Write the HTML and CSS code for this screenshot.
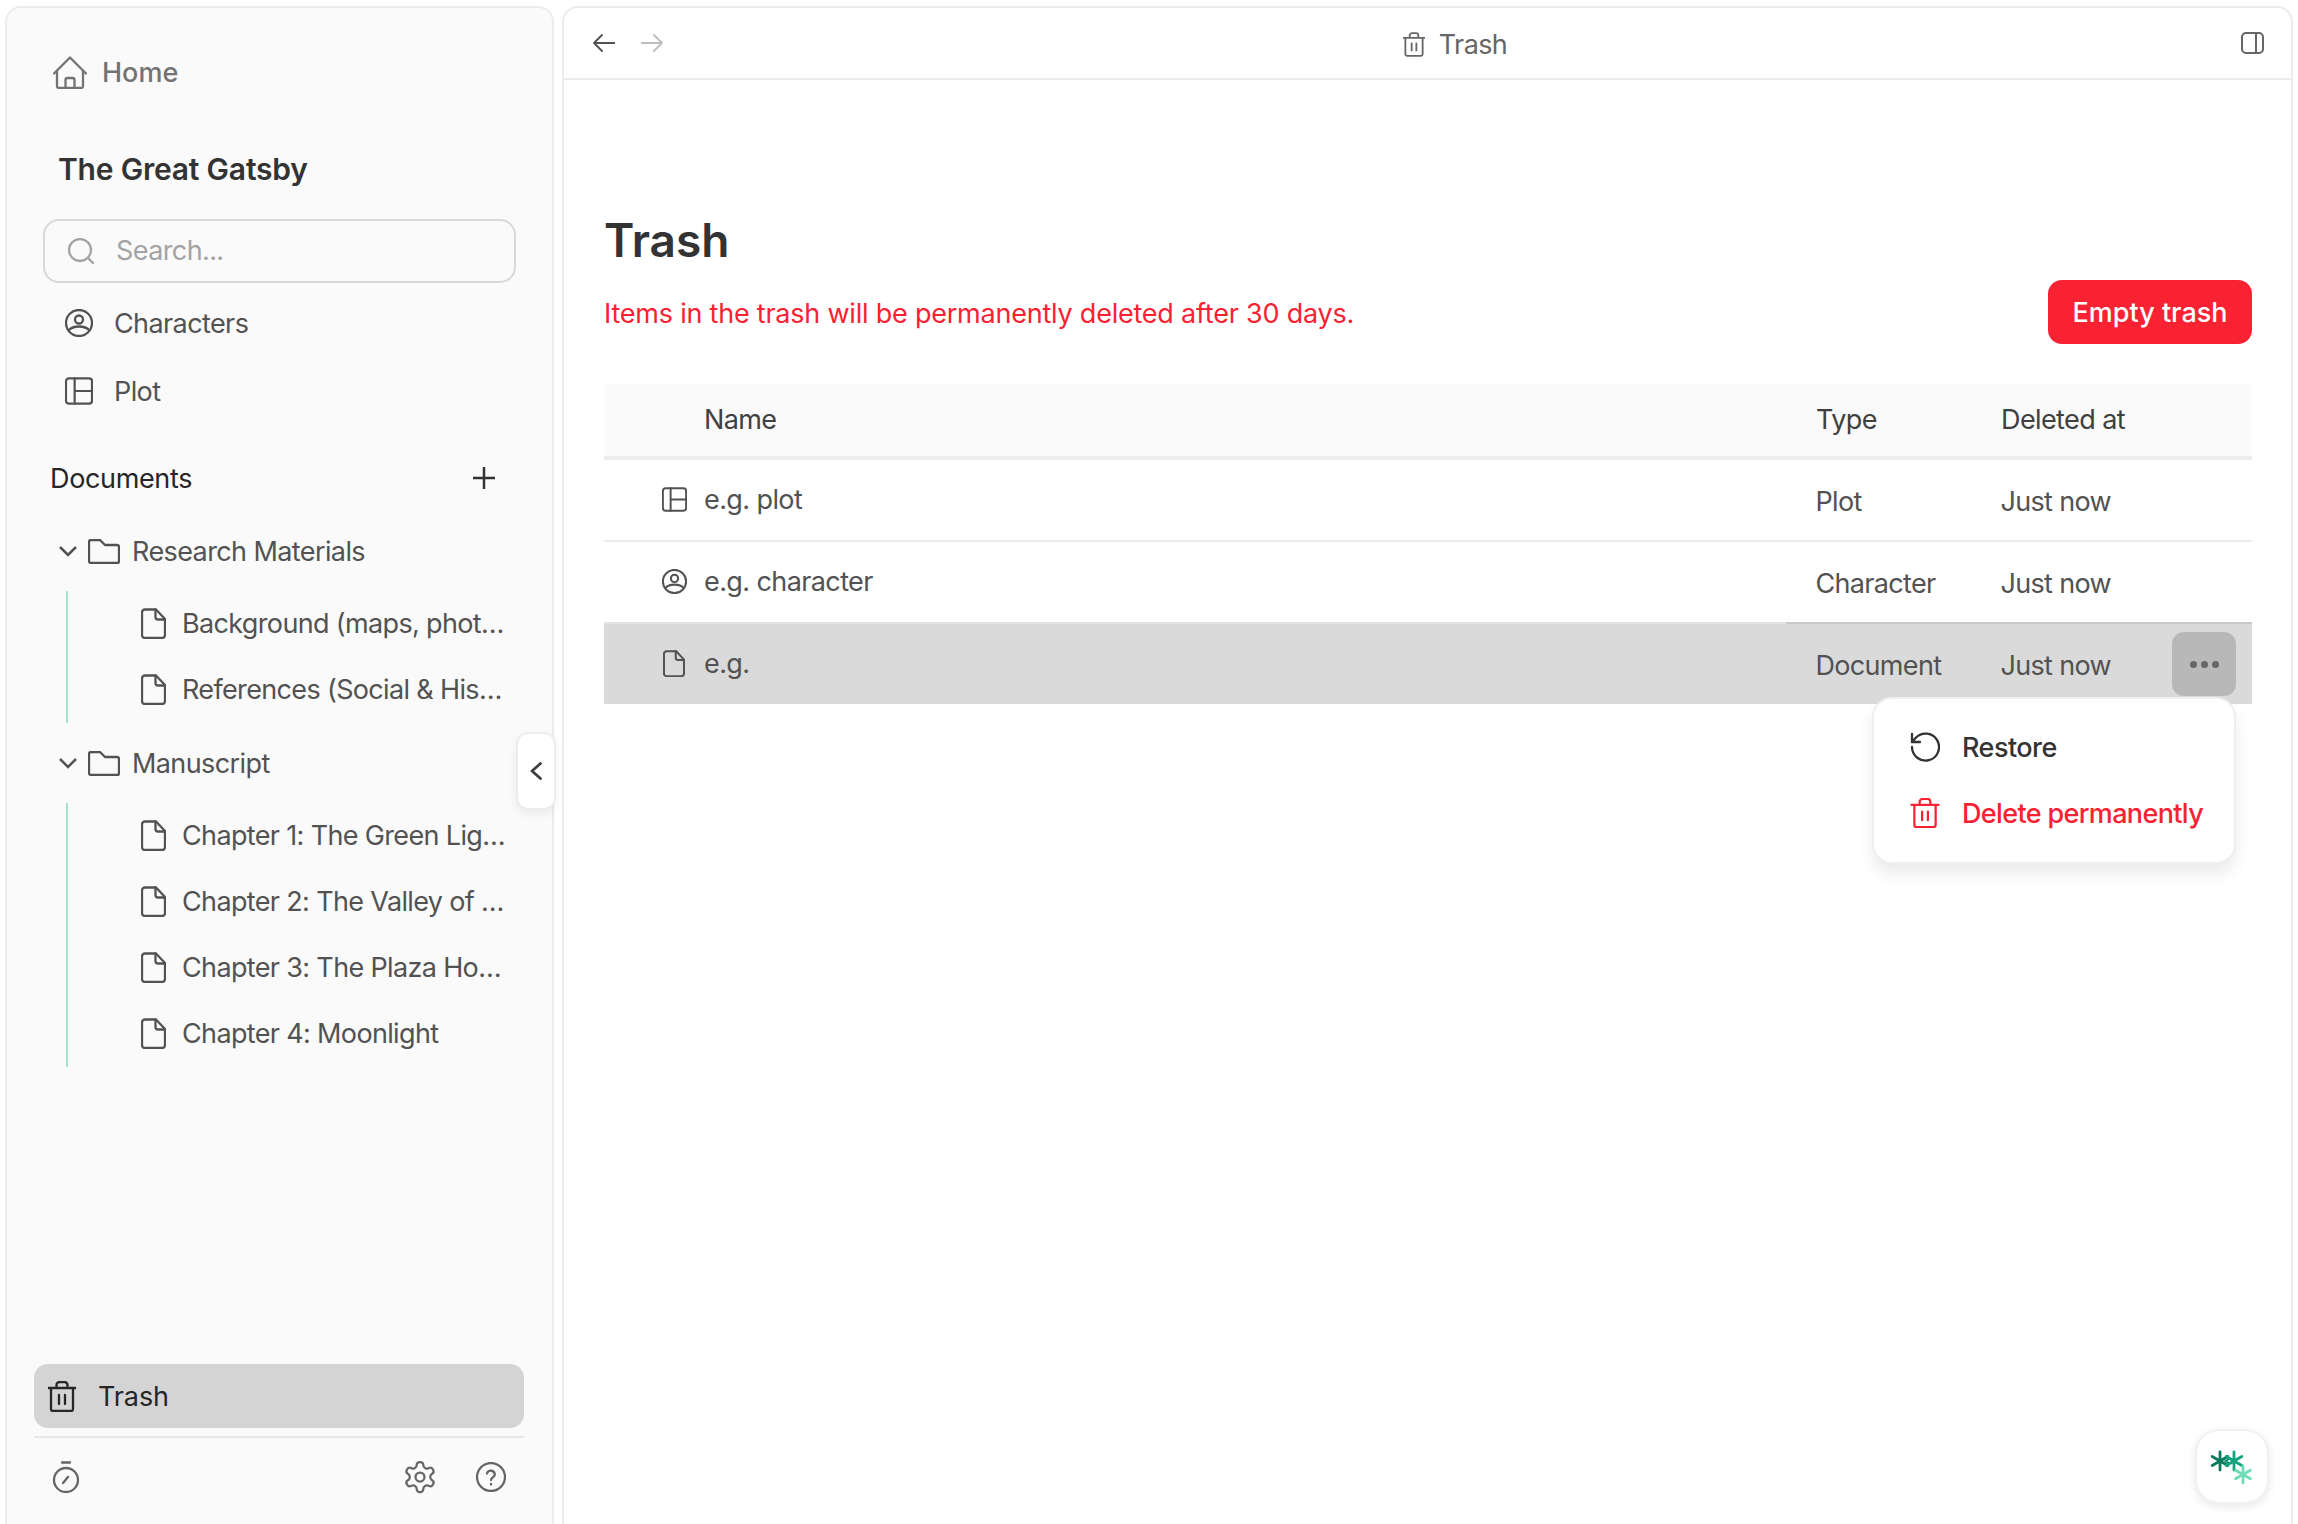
FILE: index.html
```html
<!DOCTYPE html>
<html lang="en">
<head>
<meta charset="utf-8">
<title>Trash</title>
<link rel="stylesheet" href="styles.css">
</head>
<body>
<svg class="sprite" xmlns="http://www.w3.org/2000/svg">
  <symbol id="i-home" viewBox="0 0 34 33"><path d="M1 17.5 17 1.5l16 16M4 14.5V30a2 2 0 0 0 2 2h22a2 2 0 0 0 2-2V14.5M12.5 32v-8a2 2 0 0 1 2-2h5a2 2 0 0 1 2 2v8"/></symbol>
  <symbol id="i-search" viewBox="0 0 26 26"><circle cx="12" cy="12" r="11"/><path d="m20 20 5 5"/></symbol>
  <symbol id="i-user" viewBox="0 0 28 28"><circle cx="14" cy="14" r="13"/><circle cx="14" cy="10.5" r="4"/><path d="M3.5 21.5C6 18.5 9.500 17.500 14 17.500s8 1 10.500 4"/></symbol>
  <symbol id="i-plot" viewBox="0 0 29 28"><rect x="1" y="1" width="27" height="26" rx="3"/><path d="M10 1v26M10 14h18"/></symbol>
  <symbol id="i-doc" viewBox="0 0 25 31"><path d="M4 1.500h11L24 11v16a3 3 0 0 1-3 3H4a3 3 0 0 1-3-3V4.500a3 3 0 0 1 3-3Z"/><path d="M14.500 1.500V9a2.500 2.500 0 0 0 2.500 2.500h7"/></symbol>
  <symbol id="i-folder" viewBox="0 0 32 25"><path d="M1 3a2 2 0 0 1 2-2h9l5 5h12a2 2 0 0 1 2 2v14a2 2 0 0 1-2 2H3a2 2 0 0 1-2-2Z"/></symbol>
  <symbol id="i-trash" viewBox="0 0 28 31"><path d="M0 7h28M3 7v21a2 2 0 0 0 2 2h18a2 2 0 0 0 2-2V7M8.500 7V4a3 3 0 0 1 3-3h5a3 3 0 0 1 3 3v3M11 14v9M17 14v9"/></symbol>
  <symbol id="i-restore" viewBox="0 0 30 30"><path d="M2 15A13.500 13.500 0 1 0 6 5.500L2 10"/><path d="M2 2v8h8"/></symbol>
  <symbol id="i-watch" viewBox="0 0 28 32"><circle cx="14" cy="19" r="12"/><path d="M10 1.500h8M11 22l5-6"/></symbol>
  <symbol id="i-gear" viewBox="0 0 24 24"><path d="M12.220 2h-.44a2 2 0 0 0-2 2v.18a2 2 0 0 1-1 1.730l-.43.25a2 2 0 0 1-2 0l-.15-.08a2 2 0 0 0-2.730.73l-.22.38a2 2 0 0 0 .73 2.730l.15.1a2 2 0 0 1 1 1.720v.51a2 2 0 0 1-1 1.740l-.15.09a2 2 0 0 0-.73 2.730l.22.38a2 2 0 0 0 2.730.73l.15-.08a2 2 0 0 1 2 0l.43.25a2 2 0 0 1 1 1.730V20a2 2 0 0 0 2 2h.44a2 2 0 0 0 2-2v-.18a2 2 0 0 1 1-1.730l.43-.25a2 2 0 0 1 2 0l.15.08a2 2 0 0 0 2.730-.73l.22-.39a2 2 0 0 0-.73-2.730l-.15-.08a2 2 0 0 1-1-1.740v-.5a2 2 0 0 1 1-1.740l.15-.09a2 2 0 0 0 .73-2.730l-.22-.38a2 2 0 0 0-2.730-.73l-.15.08a2 2 0 0 1-2 0l-.43-.25a2 2 0 0 1-1-1.730V4a2 2 0 0 0-2-2z"/><circle cx="12" cy="12" r="3"/></symbol>
  <symbol id="i-help" viewBox="0 0 30 30"><circle cx="15" cy="15" r="14"/><path d="M11 11.500a4 4 0 0 1 7.800 1c0 2.700-3.800 3-3.800 5.500M15 22v.5"/></symbol>
</svg>

<div class="app">
  <aside class="sidebar">
    <a class="home"><svg class="ico ico-home"><use href="#i-home"/></svg><span>Home</span></a>
    <h2 class="book">The Great Gatsby</h2>
    <div class="search"><svg class="ico ico-search"><use href="#i-search"/></svg><span>Search...</span></div>
    <div class="nav-row"><svg class="ico ico-nav"><use href="#i-user"/></svg><span>Characters</span></div>
    <div class="nav-row"><svg class="ico ico-nav"><use href="#i-plot"/></svg><span>Plot</span></div>
    <div class="docs-head"><span>Documents</span>
      <svg class="plus" viewBox="0 0 22 22"><path d="M11 0v22M0 11h22"/></svg>
    </div>
    <div class="tree">
      <div class="folder">
        <svg class="chev" viewBox="0 0 18 11"><path d="m1 1 8 8 8-8"/></svg>
        <svg class="ico ico-folder"><use href="#i-folder"/></svg><span>Research Materials</span>
      </div>
      <div class="children">
        <div class="leaf"><svg class="ico ico-doc"><use href="#i-doc"/></svg><span>Background (maps, phot…</span></div>
        <div class="leaf"><svg class="ico ico-doc"><use href="#i-doc"/></svg><span>References (Social &amp; His…</span></div>
      </div>
      <div class="folder">
        <svg class="chev" viewBox="0 0 18 11"><path d="m1 1 8 8 8-8"/></svg>
        <svg class="ico ico-folder"><use href="#i-folder"/></svg><span>Manuscript</span>
      </div>
      <div class="children">
        <div class="leaf"><svg class="ico ico-doc"><use href="#i-doc"/></svg><span>Chapter 1: The Green Lig…</span></div>
        <div class="leaf"><svg class="ico ico-doc"><use href="#i-doc"/></svg><span>Chapter 2: The Valley of …</span></div>
        <div class="leaf"><svg class="ico ico-doc"><use href="#i-doc"/></svg><span>Chapter 3: The Plaza Ho…</span></div>
        <div class="leaf"><svg class="ico ico-doc"><use href="#i-doc"/></svg><span>Chapter 4: Moonlight</span></div>
      </div>
    </div>
    <div class="side-foot">
      <div class="trash-link"><svg class="ico ico-trash"><use href="#i-trash"/></svg><span>Trash</span></div>
      <div class="tools">
        <svg class="ico ico-watch"><use href="#i-watch"/></svg>
        <div class="tools-right">
          <svg class="ico ico-gear"><use href="#i-gear"/></svg>
          <svg class="ico ico-help"><use href="#i-help"/></svg>
        </div>
      </div>
    </div>
    <button class="collapse"><svg viewBox="0 0 12 18"><path d="M10.500 1.500 2 9l8.500 7.500"/></svg></button>
  </aside>

  <main class="main">
    <header class="topbar">
      <div class="arrows">
        <svg class="arrow" viewBox="0 0 22 18"><path d="M22 9H1M9 1 1 9l8 8"/></svg>
        <svg class="arrow arrow-off" viewBox="0 0 22 18"><path d="M0 9h21M13 1l8 8-8 8"/></svg>
      </div>
      <div class="crumb"><svg class="ico ico-crumb"><use href="#i-trash"/></svg><span>Trash</span></div>
      <svg class="panel-ico" viewBox="0 0 23 22"><rect x="1" y="1" width="21" height="20" rx="4"/><path d="M15 1v20"/></svg>
    </header>
    <section class="content">
      <h1>Trash</h1>
      <div class="lead">
        <p>Items in the trash will be permanently deleted after 30 days.</p>
        <button class="empty">Empty trash</button>
      </div>
      <div class="table-wrap">
        <table>
          <colgroup><col class="c-name"><col class="c-type"><col class="c-date"><col class="c-act"></colgroup>
          <thead>
            <tr><th class="name-h">Name</th><th>Type</th><th>Deleted at</th><th></th></tr>
          </thead>
          <tbody>
            <tr>
              <td><div class="name"><span class="name-ico"><svg class="ico ico-row"><use href="#i-plot"/></svg></span>e.g. plot</div></td>
              <td class="meta">Plot</td><td class="meta">Just now</td><td></td>
            </tr>
            <tr class="before-hover">
              <td><div class="name"><span class="name-ico"><svg class="ico ico-row"><use href="#i-user"/></svg></span>e.g. character</div></td>
              <td class="meta">Character</td><td class="meta">Just now</td><td></td>
            </tr>
            <tr class="hover">
              <td><div class="name"><span class="name-ico"><svg class="ico ico-rowdoc"><use href="#i-doc"/></svg></span>e.g.</div></td>
              <td class="meta">Document</td><td class="meta">Just now</td>
              <td><button class="more"><i></i><i></i><i></i></button></td>
            </tr>
          </tbody>
        </table>
        <div class="menu">
          <div class="menu-item"><svg class="ico ico-menu"><use href="#i-restore"/></svg><span>Restore</span></div>
          <div class="menu-item danger"><svg class="ico ico-menu"><use href="#i-trash"/></svg><span>Delete permanently</span></div>
        </div>
      </div>
    </section>
  </main>
</div>

<button class="fab">
  <svg viewBox="0 0 44 36">
    <g class="ast a1"><path d="M10 3v18M2.200 7.500l15.600 9M2.200 16.500l15.600-9"/></g>
    <path class="link" d="m15.500 12 4.500-2.500 4.500 2.500-4.500 2.500z"/>
    <g class="ast a2"><path d="M24 3v18M16.200 7.500l15.600 9M16.200 16.500l15.600-9"/></g>
    <g class="ast a3"><path d="M33 17v17M25.600 21.200l14.800 8.600M25.600 29.800l14.800-8.600"/></g>
  </svg>
</button>
</body>
</html>
```

FILE: styles.css
```css
* { box-sizing: border-box; }
html, body { margin: 0; height: 1524px; overflow: hidden; background: #fff; }
body { font-family: Inter, "Liberation Sans", sans-serif; font-size: 27px; letter-spacing: -.6px; color: #525252; }
.sprite { position: absolute; width: 0; height: 0; }
button { font: inherit; letter-spacing: inherit; border: 0; padding: 0; background: none; }
h1, h2, p { margin: 0; }

.ico { fill: none; stroke: currentColor; stroke-width: 2.300; stroke-linecap: round; stroke-linejoin: round; flex: none; overflow: visible; }

.app { display: flex; gap: 8px; padding: 6px 5px 0; height: 1524px; align-items: flex-start; }

/* sidebar */
.sidebar { position: relative; width: 549px; height: 1518px; flex: none; display: flex; flex-direction: column; background: #fafafa; border: 2px solid #ececec; border-bottom: 0; border-radius: 16px 16px 0 0; }
.home { display: flex; align-items: center; height: 44px; margin-top: 42px; padding-left: 46px; gap: 15px; color: #737373; font-weight: 500; letter-spacing: 0; }
.ico-home { width: 34px; height: 33px; }
.book { height: 40px; margin-top: 55px; padding-left: 51px; font-size: 30px; line-height: 40px; font-weight: 600; letter-spacing: -.2px; color: #333; }
.search { display: flex; align-items: center; gap: 22px; width: 473px; height: 64px; margin: 30px 0 0 36px; padding: 0 0 1px 23px; border: 2px solid #d8d8d8; border-radius: 16px; color: #a3a3a3; }
.ico-search { width: 26px; height: 26px; }
.nav-row { display: flex; align-items: center; height: 68px; padding-left: 58px; gap: 21px; }
.search + .nav-row { margin-top: 6px; }
.ico-nav { width: 28px; height: 28px; }
.docs-head { display: flex; align-items: center; justify-content: space-between; height: 40px; margin-top: 33px; padding: 0 57px 0 43px; color: #262626; font-weight: 400; letter-spacing: -.35px; }
.plus { width: 22px; height: 22px; fill: none; stroke: #333; stroke-width: 2.500; }
.tree { margin-top: 20px; }
.folder { display: flex; align-items: center; height: 66px; padding-left: 52px; color: #525252; }
.chev { width: 18px; height: 11px; fill: none; stroke: currentColor; stroke-width: 2.500; flex: none; margin-right: 11px; }
.ico-folder { width: 32px; height: 25px; margin-right: 12px; }
.children { margin: 7px 0 7px 59px; border-left: 2px solid #a8e3cf; }
.leaf { display: flex; align-items: center; height: 66px; padding: 0 0 2px 73px; gap: 16px; white-space: nowrap; letter-spacing: -.65px; }
.ico-doc { width: 25px; height: 31px; }
.side-foot { margin-top: auto; padding: 0 28px 27px 27px; }
.trash-link { display: flex; align-items: center; height: 64px; padding-left: 14px; gap: 22px; background: #d4d4d4; border-radius: 14px; color: #262626; letter-spacing: -.1px; }
.ico-trash { width: 28px; height: 31px; }
.tools { display: flex; align-items: center; justify-content: space-between; height: 61px; margin-top: 8px; padding: 18px 18px 0 18px; border-top: 2px solid #e8e8e8; color: #666; }
.ico-watch { width: 28px; height: 32px; }
.tools-right { display: flex; align-items: center; gap: 38px; }
.ico-gear { width: 36px; height: 36px; stroke-width: 1.500; }
.ico-help { width: 30px; height: 30px; }
.collapse { position: absolute; left: 509px; top: 724px; width: 40px; height: 78px; display: flex; align-items: center; justify-content: center; background: #fff; border: 2px solid #ededed; border-radius: 12px; box-shadow: 0 4px 10px rgba(0,0,0,.06); }
.collapse svg { width: 12px; height: 18px; fill: none; stroke: #404040; stroke-width: 2.800; stroke-linecap: round; stroke-linejoin: round; }

/* main */
.main { width: 1731px; height: 1518px; flex: none; border: 2px solid #ececec; border-bottom: 0; border-radius: 16px 16px 0 0; background: #fff; }
.topbar { display: flex; align-items: center; justify-content: space-between; height: 72px; padding: 0 27px 0 29px; border-bottom: 2px solid #ececec; }
.arrows { display: flex; gap: 26px; }
.arrow { width: 22px; height: 18px; fill: none; stroke: #525252; stroke-width: 1.800; stroke-linecap: round; stroke-linejoin: round; }
.arrow-off { stroke: #bdbdbd; }
.crumb { display: flex; align-items: center; gap: 14px; margin: 2px 0 0 6px; color: #666; }
.ico-crumb { width: 22px; height: 25px; }
.panel-ico { width: 23px; height: 22px; fill: none; stroke: #666; stroke-width: 2; }
.content { padding: 133px 39px 0 40px; }
h1 { font-size: 46px; line-height: 54px; font-weight: 600; letter-spacing: 0; color: #333; }
.lead { display: flex; align-items: center; justify-content: space-between; margin-top: 13px; }
.lead p { padding-top: 2px; color: #f92232; letter-spacing: -.22px; }
.empty { width: 204px; height: 64px; background: #f92232; color: #fff; border-radius: 14px; font-weight: 500; letter-spacing: 0; }
.table-wrap { position: relative; margin-top: 40px; }
table { width: 1648px; table-layout: fixed; border-collapse: separate; border-spacing: 0; }
.c-name { width: 1182px; }
.c-type { width: 185px; }
.c-date { width: 201px; }
.c-act { width: 80px; }
th { height: 76px; padding: 0 0 2px 30px; background: #fafafa; border-bottom: 4px solid #ededed; text-align: left; font-weight: 400; color: #404040; }
th.name-h { padding-left: 100px; }
td { height: 82px; padding: 0; border-bottom: 2px solid #ededed; }
.meta { padding: 3px 0 0 29.500px; letter-spacing: -.68px; }
.name { display: flex; align-items: center; padding: 0 0 1px 58px; }
.name-ico { display: flex; justify-content: center; width: 24px; margin-right: 18px; }
.ico-row { width: 25px; height: 25px; }
.ico-rowdoc { width: 22px; height: 27px; }
.before-hover td { border-bottom-color: #c8c8c8; }
.before-hover td:first-child { border-bottom-color: #e3e3e3; }
.hover td { height: 80px; background: #dadada; border-bottom: 0; }
.more { display: flex; align-items: center; justify-content: center; gap: 4px; width: 64px; height: 64px; background: #b8b8b8; border-radius: 12px; }
.more i { width: 7px; height: 7px; border-radius: 50%; background: #666; }
.menu { position: absolute; top: 313px; right: 16px; width: 364px; height: 167px; padding: 15px 0 0 36px; background: #fff; border: 2px solid #efefef; border-radius: 20px; box-shadow: 0 10px 16px rgba(0,0,0,.08); }
.menu-item { display: flex; align-items: center; height: 66px; gap: 22px; color: #333; font-weight: 500; letter-spacing: -.55px; }
.menu-item.danger { color: #f92232; letter-spacing: -.65px; }
.ico-menu { width: 30px; height: 30px; }

.fab { position: fixed; right: 29px; bottom: 20px; width: 74px; height: 75px; display: flex; align-items: center; justify-content: center; background: #fff; border: 2px solid #f1f1f1; border-radius: 24px; box-shadow: 0 3px 10px rgba(0,0,0,.09); }
.fab svg { width: 44px; height: 36px; fill: none; stroke-width: 2.800; stroke-linecap: round; }
.a1 { stroke: #0b7a5c; }
.a2 { stroke: #12a37f; }
.a3 { stroke: #6fdcb8; }
.link { stroke: #0e8c6c; stroke-width: 2; }
```
